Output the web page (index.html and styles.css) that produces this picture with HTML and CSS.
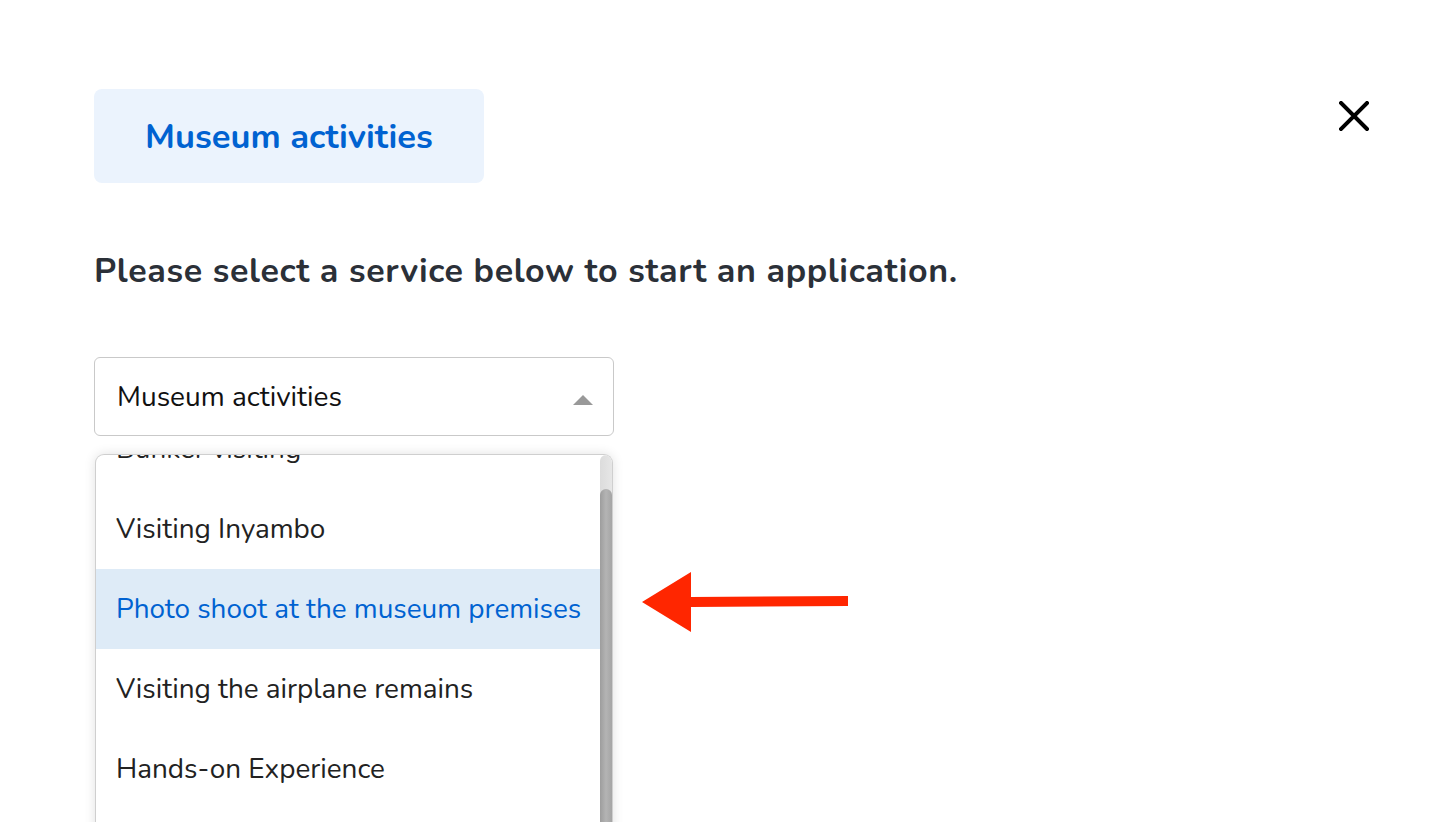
FILE: index.html
```html
<!DOCTYPE html>
<html lang="en">
<head>
<meta charset="utf-8">
<title>Museum activities</title>
<link rel="stylesheet" href="styles.css">
</head>
<body>
<div class="page">
  <header class="top">
    <div class="pill">Museum activities</div>
    <button class="close" aria-label="Close">
      <svg width="30" height="30" viewBox="0 0 30 30"><path d="M2 2 L28 28 M28 2 L2 28" stroke="#000" stroke-width="4" stroke-linecap="square"/></svg>
    </button>
  </header>
  <h1 class="lead">Please select a service below to start an application.</h1>
  <div class="field">
    <div class="select">
      <span>Museum activities</span>
      <span class="caret"></span>
    </div>
    <div class="menu">
      <ul class="list">
        <li class="opt">Bunker visiting</li>
        <li class="opt">Visiting Inyambo</li>
        <li class="opt active">Photo shoot at the museum premises</li>
        <li class="opt">Visiting the airplane remains</li>
        <li class="opt">Hands-on Experience</li>
        <li class="opt">Guided tour</li>
      </ul>
      <div class="scroll"><div class="thumb"></div></div>
    </div>
    <svg class="arrow" width="210" height="60" viewBox="0 0 210 60"><path d="M0 30 L49 0 L49 25 L206 24 L206 34 L49 35 L49 60 Z" fill="#ff2600"/></svg>
  </div>
</div>
</body>
</html>
```
FILE: styles.css
```css
* { box-sizing: border-box; }
html, body { margin: 0; padding: 0; background: #fff; height: 822px; overflow: hidden; }
body { font-family: "Nunito", "Lato", "Open Sans", sans-serif; }
.page { padding: 89px 0 0 94px; }
.top { display: flex; justify-content: space-between; align-items: flex-start; padding-right: 85px; }
.pill {
  width: 390px; height: 94px; border-radius: 8px; background: #ebf3fd;
  color: #0062d1; font-weight: 700; font-size: 34.5px;
  display: flex; align-items: center; justify-content: center;
}
.close { border: 0; background: none; padding: 0; margin-top: 12px; width: 30px; height: 30px; }
.close svg { display: block; }
.lead { margin: 68px 0 0; font-size: 34px; font-weight: 700; color: #2b3038; line-height: 40px; letter-spacing: 0.66px; white-space: nowrap; }
.field { position: relative; margin-top: 66px; width: 520px; }
.select {
  height: 79px; border: 1.5px solid #c9c9c9; border-radius: 6px;
  display: flex; align-items: center; justify-content: space-between;
  padding: 0 20px 0 22px; font-size: 28px; color: #111;
}
.caret { width: 0; height: 0; border-left: 10px solid transparent; border-right: 10px solid transparent; border-bottom: 10px solid #999; margin-top: 6px; }
.menu {
  margin: 18px 1px 0; height: 400px; border: 1.5px solid #cfcfcf; border-bottom: 0;
  border-radius: 9px 9px 0 0; overflow: hidden; position: relative;
  box-shadow: 0 0 12px rgba(0,0,0,0.12); background: #fff;
  display: flex;
}
.list { list-style: none; margin: -46px 0 0; padding: 0; flex: 1; }
.opt { height: 80px; display: flex; align-items: center; padding-left: 20px; font-size: 27.9px; color: #222; }
.opt.active { background: #deebf7; color: #0062d1; }
.scroll { width: 12px; background: linear-gradient(90deg, #dcdcdc, #e6e6e6); padding-top: 34px; border-radius: 6px 6px 0 0; }
.thumb { height: 100%; border-radius: 6px 6px 0 0; background: linear-gradient(90deg, #9d9d9d, #b4b4b4 50%, #a5a5a5); }
.arrow { position: absolute; left: 548px; top: 215px; }
```
